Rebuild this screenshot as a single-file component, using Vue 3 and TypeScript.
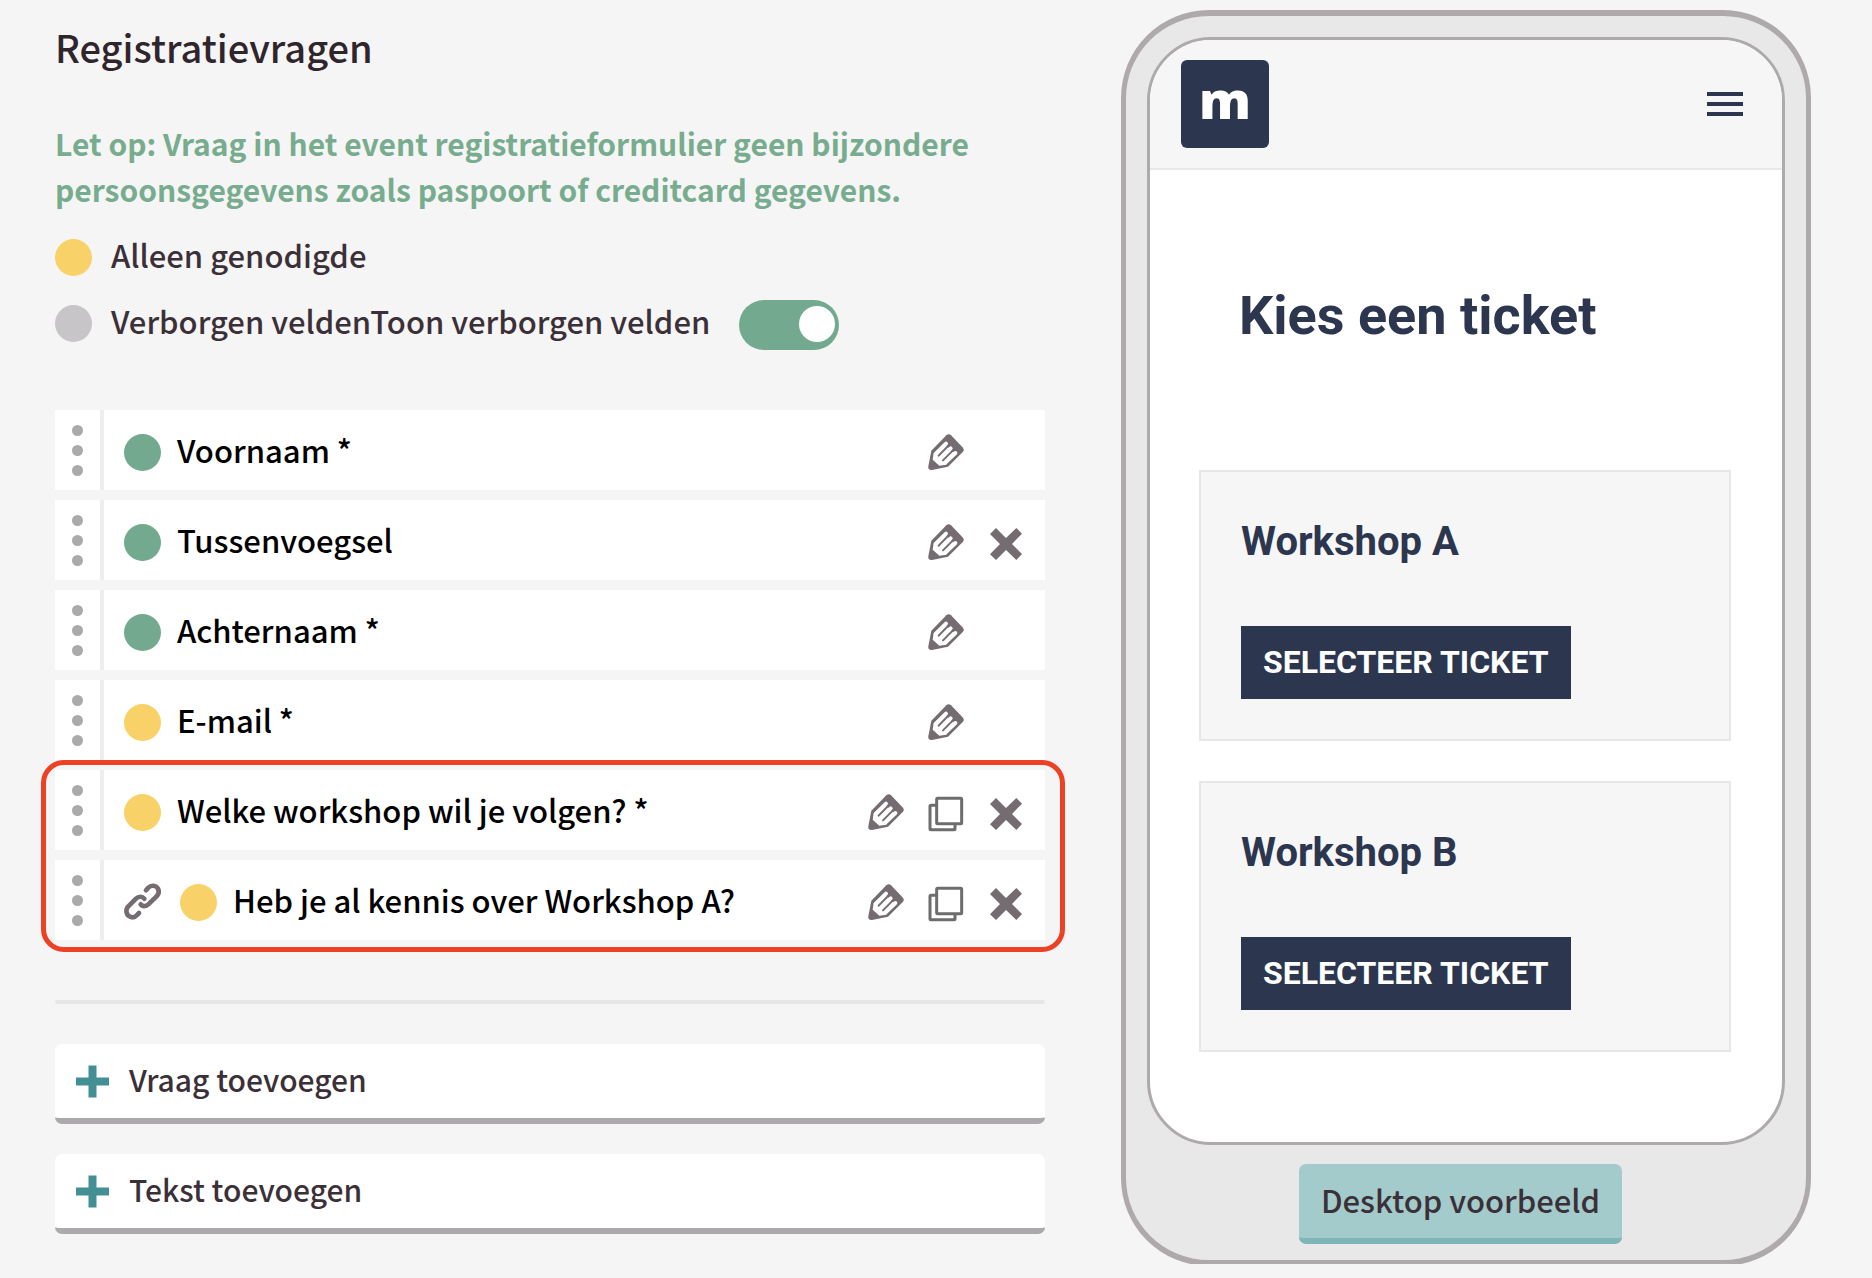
<script setup lang="ts">
import { ref } from 'vue'

interface Question {
  label: string
  tone: 'green' | 'yellow'
  linked?: boolean
  copy?: boolean
  removable?: boolean
}

const showHidden = ref(true)

const groups: { marked: boolean; questions: Question[] }[] = [
  {
    marked: false,
    questions: [
      { label: 'Voornaam *', tone: 'green' },
      { label: 'Tussenvoegsel', tone: 'green', removable: true },
      { label: 'Achternaam *', tone: 'green' },
      { label: 'E-mail *', tone: 'yellow' },
    ],
  },
  {
    marked: true,
    questions: [
      { label: 'Welke workshop wil je volgen? *', tone: 'yellow', copy: true, removable: true },
      { label: 'Heb je al kennis over Workshop A?', tone: 'yellow', linked: true, copy: true, removable: true },
    ],
  },
]

const addActions = ['Vraag toevoegen', 'Tekst toevoegen']
const tickets = ['Workshop A', 'Workshop B']
</script>

<template>
  <main class="page">
    <section class="editor">
      <h1 class="title">Registratievragen</h1>
      <p class="notice">
        Let op: Vraag in het event registratieformulier geen bijzondere persoonsgegevens zoals paspoort of creditcard gegevens.
      </p>

      <div class="legend">
        <span class="dot yellow"></span>
        <span class="legend-text">Alleen genodigde</span>
      </div>
      <div class="legend">
        <span class="dot grey"></span>
        <label class="legend-text" for="show-hidden">Verborgen velden<span>Toon verborgen velden</span></label>
        <input id="show-hidden" v-model="showHidden" class="toggle" type="checkbox" />
      </div>

      <div class="questions">
        <ul v-for="(group, i) in groups" :key="i" class="group" :class="{ marked: group.marked }">
          <li v-for="q in group.questions" :key="q.label" class="row">
            <span class="handle"><i></i><i></i><i></i></span>
            <div class="body">
              <svg v-if="q.linked" class="link" viewBox="0 0 111 111" aria-hidden="true">
                <path d="M66 19L73 11C82 2 96 4 102 14C106 22 104 30 99 36L73 61C65 69 54 67 50 61" />
                <path d="M61 44C55 37 44 36 36 44L13 67C4 76 6 91 16 97C24 102 32 100 38 94L45 87" />
              </svg>
              <span class="dot" :class="q.tone"></span>
              <span class="label">{{ q.label }}</span>
              <span class="actions">
                <button class="icon" type="button" :aria-label="`${q.label} bewerken`">
                  <svg viewBox="0 0 108 108">
                    <path fill="#756c71" d="M10 50L55 4Q62 -3 69 4L105 41Q110 47 105 53L60 98L12 108Q-1 109 1 97Z" />
                    <path fill="#fff" d="M17 58L14 77L34 95L54 92L80 60L50 30Z" />
                    <path stroke="#fff" stroke-width="12" stroke-linecap="round" d="M54 29L23 60M68 43L36 76M82 57L52 86" />
                    <path stroke="#756c71" stroke-width="6" stroke-linecap="round" d="M63 33L32 65M77 47L45 79" />
                  </svg>
                </button>
                <button v-if="q.copy" class="icon" type="button" :aria-label="`${q.label} kopiëren`">
                  <svg viewBox="0 0 108 108" fill="none" stroke="#6e6c6d" stroke-width="9">
                    <rect x="26" y="13" width="75" height="76" rx="3" />
                    <path d="M26 34H9Q6 34 6 37V104Q6 107 9 107H78Q81 107 81 104V90" />
                  </svg>
                </button>
                <button v-if="q.removable" class="icon" type="button" :aria-label="`${q.label} verwijderen`">
                  <svg viewBox="0 0 108 108">
                    <path fill="#756c71" d="M24 12L54 42L85 12L102 29L72 60L102 90L85 108L54 78L24 108L6 91L36 60L6 30Z" />
                  </svg>
                </button>
                <span v-else class="icon"></span>
              </span>
            </div>
          </li>
        </ul>
      </div>

      <hr class="divider" />

      <button v-for="action in addActions" :key="action" class="add" type="button">
        <svg viewBox="0 0 33 33" aria-hidden="true"><path d="M0 12.5H12.5V0.5H20.5V12.5H33V20.5H20.5V32.5H12.5V20.5H0Z" /></svg>
        <span>{{ action }}</span>
      </button>
    </section>

    <section class="preview">
      <div class="phone">
        <div class="screen">
          <header class="bar">
            <span class="logo">m</span>
            <button class="menu" type="button" aria-label="Menu"><i></i><i></i><i></i></button>
          </header>
          <div class="content">
            <h2 class="choose">Kies een ticket</h2>
            <article v-for="ticket in tickets" :key="ticket" class="card">
              <h3>{{ ticket }}</h3>
              <button type="button">SELECTEER TICKET</button>
            </article>
          </div>
        </div>
        <button class="desktop" type="button">Desktop voorbeeld</button>
      </div>
    </section>
  </main>
</template>

<style>
body {
  background: #f5f5f5;
}
</style>

<style scoped>
* {
  box-sizing: border-box;
}

button {
  font: inherit;
  border: 0;
  padding: 0;
  cursor: pointer;
}

.page {
  display: grid;
  grid-template-columns: 990fr 690fr;
  align-items: start;
  gap: 76px;
  padding: 10px 61px 0 55px;
  font-family: 'Noto Sans CJK JP', 'Noto Sans', sans-serif;
  font-size: 31px;
  font-weight: 500;
  line-height: 46px;
  color: #3b3038;
}

.title {
  margin: 12px 0 48px;
  font-size: 38px;
  line-height: 50px;
  font-weight: 500;
  color: #30252c;
}

.notice {
  margin: 0 0 12px;
  font-size: 30px;
  font-weight: 700;
  color: #78ac8e;
}

.legend {
  display: flex;
  align-items: center;
  height: 66px;
}

.legend .dot {
  margin-right: 19px;
}

.legend-text {
  padding-bottom: 4px;
}

.dot {
  flex: none;
  width: 37px;
  height: 37px;
  border-radius: 50%;
}

.green {
  background: #73aa8f;
}

.yellow {
  background: #f8d268;
}

.grey {
  background: #c8c5c9;
}

.toggle {
  appearance: none;
  width: 100px;
  height: 50px;
  margin: 4px 0 0 29px;
  padding: 6px 4px;
  border-radius: 25px;
  background: #c8c5c9;
  display: flex;
  cursor: pointer;
}

.toggle::before {
  content: '';
  width: 36px;
  height: 36px;
  border-radius: 50%;
  background: #fff;
}

.toggle:checked {
  justify-content: flex-end;
  background: #73aa8f;
}

.questions {
  display: grid;
  gap: 10px;
  margin-top: 54px;
}

.group {
  display: grid;
  gap: 10px;
  margin: 0;
  padding: 0;
  list-style: none;
}

.marked {
  position: relative;
}

.marked::after {
  content: '';
  position: absolute;
  inset: -10px -20px -12px -14px;
  border: 5px solid #ec4125;
  border-radius: 23px;
  pointer-events: none;
}

.row {
  display: flex;
  height: 80px;
  background: #fff;
  color: #000;
}

.body {
  flex: 1;
  display: flex;
  align-items: center;
  padding: 4px 21px 0 20px;
}

.handle {
  display: flex;
  flex-direction: column;
  align-items: center;
  justify-content: center;
  gap: 9px;
  width: 49px;
  border-right: 4px solid #eee;
}

.handle i {
  width: 11px;
  height: 11px;
  border-radius: 50%;
  background: #aba9ab;
}

.link {
  width: 37px;
  height: 37px;
  margin-right: 19px;
  fill: none;
  stroke: #756c71;
  stroke-width: 14;
  stroke-linecap: round;
  overflow: visible;
}

.label {
  flex: 1;
  margin-left: 16px;
  padding-bottom: 4px;
}

.actions {
  display: flex;
  gap: 24px;
}

.icon {
  width: 36px;
  height: 36px;
  background: none;
}

.icon svg {
  display: block;
  width: 36px;
  height: 36px;
  fill: none;
  overflow: visible;
}

.divider {
  height: 4px;
  margin: 60px 0 40px;
  border: 0;
  border-radius: 2px;
  background: #e6e6e6;
}

.add {
  display: flex;
  align-items: center;
  gap: 20px;
  width: 100%;
  height: 80px;
  margin-bottom: 30px;
  padding: 0 21px;
  border-bottom: 6px solid #aba9ab;
  border-radius: 7px;
  background: #fff;
  color: #3b3038;
  font-size: 30px;
}

.add span {
  padding-bottom: 4px;
}

.add svg {
  width: 33px;
  height: 33px;
  fill: #429094;
}

.preview {
  overflow: hidden;
}

.phone {
  display: flex;
  flex-direction: column;
  align-items: center;
  margin-bottom: -2px;
  padding: 21px 21px 16px;
  border: 5px solid #aeaaac;
  border-width: 6px 5px;
  border-radius: 88px;
  background: #e8e8e8;
}

.screen {
  width: 100%;
  border: 3px solid #aeaaac;
  border-radius: 64px;
  background: #fff;
  overflow: hidden;
  font-family: Roboto, sans-serif;
  font-weight: 700;
  color: #2c374f;
}

.bar {
  display: flex;
  align-items: center;
  justify-content: space-between;
  height: 130px;
  padding: 0 39px 0 31px;
  border-bottom: 2px solid #e8e8e8;
  background: #f6f6f6;
}

.logo {
  width: 88px;
  height: 88px;
  border-radius: 6px;
  background: #2c374f;
  color: #fff;
  font: 900 52px/78px 'Noto Sans', sans-serif;
  text-align: center;
}

.menu {
  display: grid;
  gap: 6px;
  width: 36px;
  background: none;
}

.menu i {
  height: 4px;
  background: #2c374f;
}

.content {
  padding: 112px 51px 90px 49px;
}

.choose {
  margin: 0 0 120px;
  padding-left: 40px;
  font-size: 54px;
  line-height: 68px;
}

.card {
  padding: 40px;
  border: 2px solid #e7e7e7;
  background: #f6f6f6;
}

.card + .card {
  margin-top: 40px;
}

.card h3 {
  margin: 0 0 54px;
  font-size: 40px;
  line-height: 60px;
}

.card button {
  height: 73px;
  padding: 0 22px 2px;
  background: #2c374f;
  color: #fff;
  font-size: 32px;
}

.desktop {
  height: 80px;
  margin: 19px 11px 0 0;
  padding: 0 22px 2px;
  border-bottom: 6px solid #7eb6b8;
  border-radius: 7px;
  background: #a3cbcb;
  color: #3b3038;
}
</style>
